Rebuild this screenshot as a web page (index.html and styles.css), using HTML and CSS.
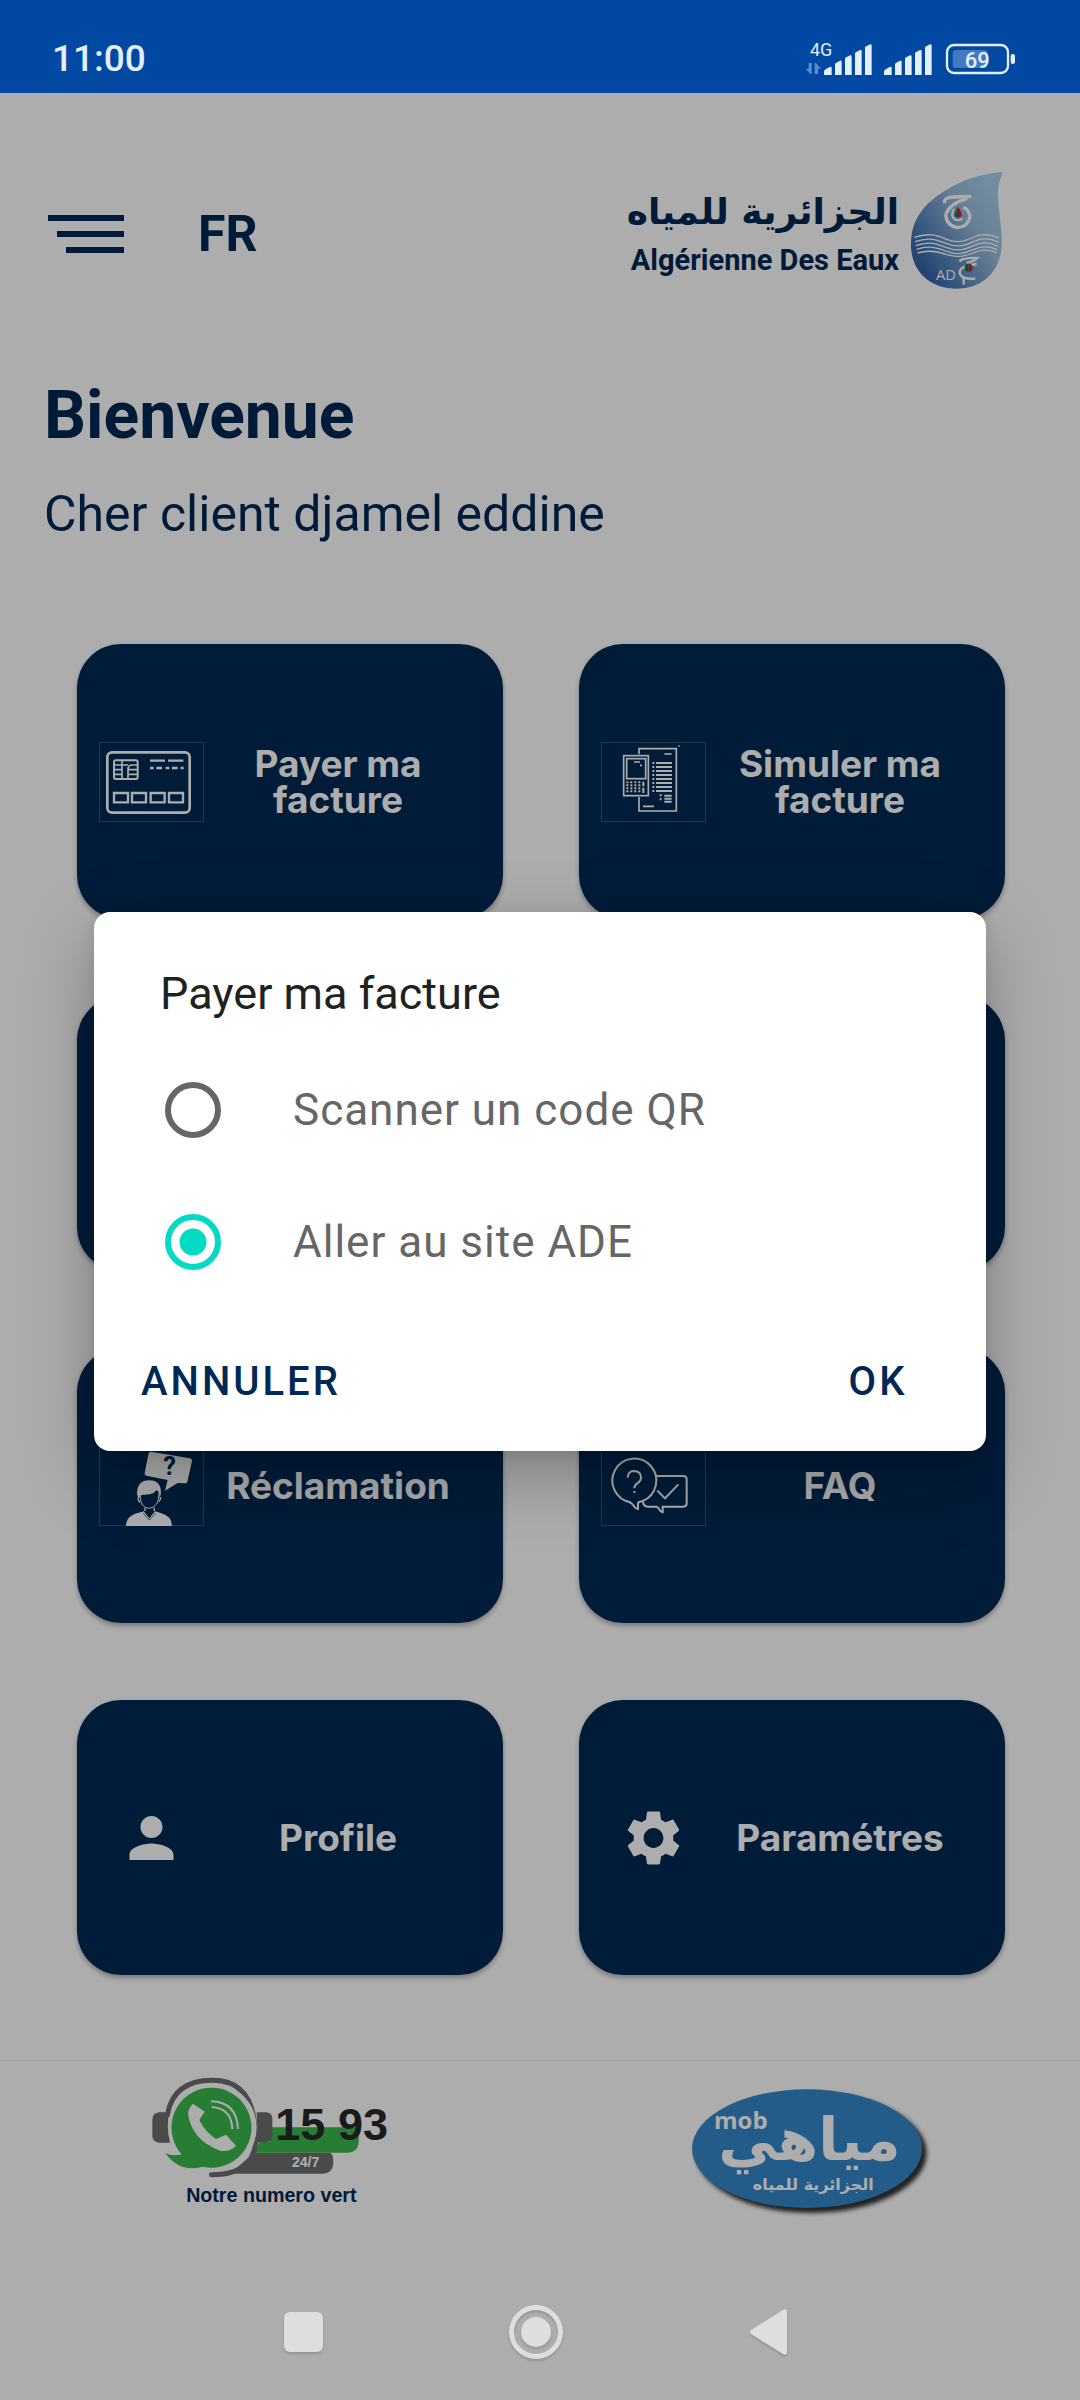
FILE: index.html
```html
<!DOCTYPE html>
<html lang="fr">
<head>
<meta charset="utf-8">
<meta name="viewport" content="width=device-width, initial-scale=1">
<title>Algérienne Des Eaux</title>
<link rel="stylesheet" href="styles.css">
</head>
<body>
<header class="status-bar">
  <span class="clock">11:00</span>
  <svg class="status-icons" viewBox="72 36 636 144" aria-hidden="true">
    <text class="network" x="90" y="102">4G</text>
    <g fill="#5c8cd0"><path d="M77 140h9v-17h9v33h-4zM104 156v-33h4l15 17h-9v16z"/></g>
    <g id="bars" fill="#e4eefc">
      <path d="M132 159v-10q0-4 5-7l12-7q6-2 6 3v21zM165 159v-32q0-3 4-5l11-6q5-1 5 4v39zM195 159v-48q0-4 4-5l11-6q5-1 5 4v55zM225 159V95q0-4 4-5l11-6q5-1 5 4v71zM255 159V78q0-4 4-5l11-6q5-1 5 4v88z"/>
    </g>
    <use href="#bars" x="180"/>
    <rect x="501" y="69" width="183" height="84" rx="21" fill="none" stroke="#e4eefc" stroke-width="7"/>
    <rect x="518" y="84" width="104" height="54" rx="10" fill="#4478c0"/>
    <rect x="692" y="96" width="13" height="30" rx="6" fill="#e4eefc"/>
    <text class="charge" x="554" y="137">69</text>
  </svg>
</header>

<div class="app">
  <main class="home">
    <div class="top-bar">
      <div class="top-actions">
        <button class="menu" type="button" aria-label="Menu">
          <svg viewBox="0 0 76 38"><path d="M0 0h76v6H0zM9 16h67v6H9zM18 32h58v6H18z" fill="#002854"/></svg>
        </button>
        <button class="language" type="button">FR</button>
      </div>
      <div class="brand">
        <div class="brand-name">
          <span class="brand-ar" lang="ar" dir="rtl">الجزائرية للمياه</span>
          <span class="brand-fr">Algérienne Des Eaux</span>
        </div>
        <svg class="drop" viewBox="930 60 282 360" aria-hidden="true">
          <defs>
            <linearGradient id="water" x1="1" y1="0.25" x2="0.2" y2="0.9">
              <stop offset="0" stop-color="#a9d0ea"/><stop offset="0.35" stop-color="#98bddc"/>
              <stop offset="0.65" stop-color="#6b96c8"/><stop offset="1" stop-color="#3466ab"/>
            </linearGradient>
          </defs>
          <path fill="url(#water)" d="M1206 66C1125 72 1045 105 985 160C945 200 932 240 933 290C936 365 990 416 1070 416C1150 416 1205 360 1205 280C1206 220 1190 160 1195 110C1198 90 1206 80 1206 66Z"/>
          <g fill="none" stroke="#fff" stroke-width="4">
            <path d="M943 262C985 248 1010 255 1040 268C1080 283 1100 270 1130 258C1155 249 1175 254 1197 264"/>
            <path d="M945 275C985 261 1010 268 1040 281C1080 296 1100 283 1130 271C1155 262 1175 267 1197 277"/>
            <path d="M947 287C985 273 1010 280 1040 293C1080 308 1100 295 1130 283C1155 274 1175 279 1195 289"/>
            <path d="M950 298C985 286 1010 292 1040 304C1080 319 1100 306 1130 295C1155 286 1175 291 1192 299"/>
            <path d="M953 309C985 299 1010 303 1040 314C1080 325 1100 316 1130 305C1155 297 1175 301 1190 308"/>
          </g>
          <path d="M1034 160Q1032 146 1048 143Q1080 138 1114 140" fill="none" stroke="#fff" stroke-width="10"/>
          <path d="M1102 145Q1050 160 1038 192A36 36 0 1 0 1110 200Q1108 180 1090 172" fill="none" stroke="#fff" stroke-width="10"/>
          <path d="M1062 176Q1050 196 1064 208Q1076 214 1088 206" fill="none" stroke="#fff" stroke-width="6"/>
          <path d="M1074 170Q1058 196 1068 201L1074 203Z" fill="#008050"/><path d="M1074 170Q1092 196 1080 201L1074 203Z" fill="#d02020"/>
          <text class="drop-label" x="1008" y="390">AD</text>
          <path d="M1078 334Q1090 322 1132 324Q1118 336 1100 338M1130 342Q1072 350 1080 372Q1086 388 1126 386M1090 384L1092 404" fill="none" stroke="#fff" stroke-width="7"/>
          <path d="M1106 341a12 12 0 0 0 0 24z" fill="#008050"/><path d="M1106 341a12 12 0 0 1 0 24z" fill="#d02020"/>
        </svg>
      </div>
    </div>

    <h1 class="welcome">Bienvenue</h1>
    <p class="client">Cher client djamel eddine</p>

    <div class="tiles">
      <button class="tile" type="button">
        <svg class="tile-icon framed" viewBox="117 363 315 240" fill="none" stroke="#fff" aria-hidden="true">
          <rect x="142" y="394" width="247" height="181" rx="14" stroke-width="8"/>
          <rect x="162" y="418" width="71" height="56" rx="5" stroke-width="6"/>
          <path d="M162 432h24M162 446h24M162 460h24M186 418v56M204 474v-30q0-10 10-12h19M204 446h29M204 460h29M186 432h18" stroke-width="5"/>
          <path d="M270 419h45M324 419h46" stroke-width="7"/>
          <path d="M270 441h11M289 441h17M317 441h11M336 441h17M362 441h9" stroke-width="7"/>
          <path d="M162 516h42v28h-42zM216 516h42v28h-42zM272 516h42v28h-42zM327 516h42v28h-42z" stroke-width="7"/>
        </svg>
        <span class="tile-label">Payer ma facture</span>
      </button>
      <button class="tile" type="button">
        <svg class="tile-icon framed" viewBox="123 363 315 240" fill="none" stroke="#fff" aria-hidden="true">
          <path d="M237 400v-17h112v187H237v-42" stroke-width="5"/>
          <rect x="191" y="404" width="74" height="120" stroke-width="5"/>
          <rect x="200" y="413" width="57" height="60" stroke-width="5"/>
          <path d="M222 423h18M240 433h6M313 399h22M249 556h33M355 375h4" stroke-width="5"/>
          <path d="M288 426h48M288 438h48M288 450h48M288 462h48M288 474h48M288 486h48M288 498h48M288 510h48M313 524h22M313 533h22M313 542h22" stroke-width="6"/>
          <path d="M280 423v92M302 520v18" stroke-width="6" stroke-dasharray="6 6"/>
          <path d="M202 481v36M214 481v36M226 481v36M238 481v36" stroke-width="6" stroke-dasharray="6 3"/>
          <path d="M250 482v14M250 500v16" stroke-width="6"/>
        </svg>
        <span class="tile-label">Simuler ma facture</span>
      </button>

      <div class="tile"></div>
      <div class="tile"></div>

      <button class="tile" type="button">
        <svg class="tile-icon framed" viewBox="117 313 315 240" fill="#fff" aria-hidden="true">
          <path d="M272 330L390 350Q397 352 396 358L382 421Q380 426 374 425L353 424L315 447L323 415L259 402Q253 400 254 394L266 334Z"/>
          <text class="bubble-mark" x="310" y="401">?</text>
          <path d="M231 455Q232 416 268 416Q303 416 303 455L299 470Q298 446 288 446Q282 460 252 459Q240 458 237 471L234 470Z"/>
          <path d="M241 462Q240 499 268 500Q297 497 297 455" fill="none" stroke="#fff" stroke-width="3"/>
          <path d="M234 470q0 8 6 12M302 466q0 10-6 14M255 498v10M283 498v10" fill="none" stroke="#fff" stroke-width="4"/>
          <path d="M198 553Q198 522 236 513L251 509L268 530L285 509L300 513Q336 522 336 553Z"/>
          <path d="M249 514L268 535L287 514" fill="none" stroke="#002a54" stroke-width="2"/>
        </svg>
        <span class="tile-label">Réclamation</span>
      </button>
      <button class="tile" type="button">
        <svg class="tile-icon framed" viewBox="123 313 315 240" fill="none" stroke="#fff" stroke-width="6" aria-hidden="true">
          <path d="M212 482A66 66 0 1 1 248 478Q236 480 234 484L234 502Q228 502 224 496Q216 484 208 482"/>
          <path d="M290 403H370Q380 403 380 413V485Q380 495 370 495H308V512Q302 512 298 504Q294 495 288 495H264Q250 495 249 480"/>
          <path d="M203 408Q204 388 222 388Q243 389 243 408Q243 418 232 425Q223 430 223 440M223 448v6" />
          <path d="M292 447L315 470L355 428"/>
        </svg>
        <span class="tile-label">FAQ</span>
      </button>

      <button class="tile" type="button">
        <svg class="tile-icon" viewBox="0 0 24 24" fill="#fff" aria-hidden="true"><path d="M12 12c2.210 0 4-1.790 4-4s-1.790-4-4-4-4 1.790-4 4 1.790 4 4 4zm0 2c-2.670 0-8 1.340-8 4v2h16v-2c0-2.660-5.330-4-8-4z"/></svg>
        <span class="tile-label">Profile</span>
      </button>
      <button class="tile" type="button">
        <svg class="tile-icon" viewBox="0 0 24 24" fill="#fff" aria-hidden="true"><path d="M19.140 12.940c.04-.3.060-.61.060-.94 0-.32-.02-.64-.07-.94l2.030-1.580c.18-.14.230-.41.120-.61l-1.920-3.320c-.12-.22-.37-.29-.59-.22l-2.390.96c-.5-.38-1.030-.7-1.620-.94l-.36-2.540c-.04-.24-.24-.41-.48-.41h-3.840c-.24 0-.43.17-.47.41l-.36 2.540c-.59.24-1.130.57-1.620.94l-2.390-.96c-.22-.08-.47 0-.59.22L2.740 8.870c-.12.21-.08.47.12.61l2.030 1.580c-.05.3-.09.63-.09.94s.02.64.07.94l-2.030 1.580c-.18.14-.23.41-.12.61l1.920 3.320c.12.22.37.29.59.22l2.390-.96c.5.38 1.030.7 1.620.94l.36 2.540c.05.24.24.41.48.41h3.840c.24 0 .44-.17.47-.41l.36-2.540c.59-.24 1.130-.56 1.620-.94l2.390.96c.22.08.47 0 .59-.22l1.920-3.320c.12-.22.070-.47-.12-.61l-2.010-1.580zM12 15.600c-1.980 0-3.600-1.620-3.600-3.600s1.620-3.600 3.600-3.600 3.600 1.620 3.600 3.600-1.620 3.600-3.600 3.600z"/></svg>
        <span class="tile-label">Paramétres</span>
      </button>
    </div>
  </main>

  <footer class="links">
    <svg class="hotline" viewBox="60 102 720 402">
      <path d="M372 338H600Q610 340 610 370Q608 400 580 401H300Z" fill="#6e6e6e"/>
      <path d="M420 262H686V305Q684 338 650 338H372L388 306H420Z" fill="#39b84c"/>
      <path d="M244 404Q395 405 375 262Q365 121 247 121Q130 121 112 225" fill="none" stroke="#6e6e6e" stroke-width="15" stroke-linecap="round"/>
      <path d="M380 217H410Q427 219 427 236V288Q426 305 408 307H384ZM118 217H88Q68 219 67 238V288Q68 306 88 308H120Q108 260 118 217Z" fill="#6e6e6e"/>
      <circle cx="248" cy="262" r="132" fill="#fff"/>
      <path d="M155 343A120 120 0 1 1 218 380Q150 400 106 340Q130 350 155 343Z" fill="#39b84c"/>
      <path d="M189 191L224 215L208 240Q225 275 258 297L288 284L318 317Q298 338 270 332Q185 300 174 222Q174 206 189 191Z" fill="#fff"/>
      <path d="M243 184Q320 186 324 267M245 201Q305 205 307 267" fill="none" stroke="#fff" stroke-width="6"/>
      <text class="hotline-number" x="436" y="299">15 93</text>
      <text class="hotline-hours" x="486" y="381">24/7</text>
      <text class="hotline-caption" x="424" y="486">Notre numero vert</text>
    </svg>
    <svg class="mobile-app" viewBox="54 42 732 432">
      <defs><filter id="soft" x="-10%" y="-10%" width="120%" height="130%"><feGaussianBlur stdDeviation="7"/></filter></defs>
      <ellipse cx="424" cy="279" rx="346" ry="180" fill="#333" filter="url(#soft)"/>
      <ellipse cx="411" cy="266" rx="345" ry="178" fill="#3588cb"/>
      <text class="app-mob" x="132" y="206">mob</text>
      <text class="app-name" x="418" y="300" lang="ar">مياهي</text>
      <text class="app-owner" x="430" y="391" lang="ar">الجزائرية للمياه</text>
    </svg>
  </footer>

  <div class="scrim">
    <form class="dialog" role="dialog" aria-labelledby="dialog-title">
      <h2 class="dialog-title" id="dialog-title">Payer ma facture</h2>
      <label class="option"><input type="radio" name="mode">Scanner un code QR</label>
      <label class="option"><input type="radio" name="mode" checked>Aller au site ADE</label>
      <div class="actions">
        <button class="action" type="button">ANNULER</button>
        <button class="action" type="button">OK</button>
      </div>
    </form>
  </div>
</div>

<nav class="system-nav">
  <button type="button" aria-label="Applications"><svg viewBox="0 0 60 60"><rect x="11" y="10" width="39" height="40" rx="6"/></svg></button>
  <button type="button" aria-label="Accueil"><svg viewBox="0 0 60 60"><path fill-rule="evenodd" d="M30 3a27 27 0 1 1 0 54a27 27 0 1 1 0-54zm0 5a22 22 0 1 0 0 44a22 22 0 1 0 0-44z"/><circle cx="30" cy="30" r="15"/></svg></button>
  <button type="button" aria-label="Retour"><svg viewBox="0 0 60 60"><path d="M12 28L44 8Q48 6 48 10V50Q48 54 44 52L12 32Q10 30 12 28Z"/></svg></button>
</nav>
</body>
</html>
```
FILE: styles.css
```css
* { box-sizing: border-box; }

body {
  margin: 0;
  min-height: 100vh;
  display: flex;
  flex-direction: column;
  background: #adadad;
  color: #002854;
  font-family: Roboto, "Liberation Sans", sans-serif;
}

button {
  border: 0;
  padding: 0;
  background: none;
  color: inherit;
  font: inherit;
}

svg { display: block; }
h1, h2, p { margin: 0; }

.status-bar {
  display: flex;
  align-items: center;
  justify-content: space-between;
  height: 93px;
  padding: 22px 64px 0 52px;
  background: #0048a2;
  color: #e4eefc;
}
.clock { padding-top: 2px; font-size: 37px; line-height: 48px; font-weight: 500; }
.status-icons { width: 212px; height: 48px; fill: #e4eefc; overflow: visible; }
.network { font-size: 54px; }
.charge { font-size: 66px; font-weight: 500; }

.app {
  position: relative;
  flex: 1;
  display: flex;
  flex-direction: column;
  background: #fff;
}
.home { flex: 1; }

.top-bar {
  display: flex;
  align-items: center;
  justify-content: space-between;
  padding: 77px 76px 0 48px;
}
.top-actions {
  display: flex;
  align-items: center;
  gap: 74px;
  padding-top: 7px;
}
.menu svg { width: 76px; height: 38px; }
.language {
  font-size: 50px;
  line-height: 56px;
  font-weight: 700;
}
.brand {
  display: flex;
  align-items: center;
  gap: 11px;
}
.brand-name {
  display: flex;
  flex-direction: column;
  align-items: flex-end;
  font-weight: 700;
}
.brand-ar { font-family: "DejaVu Sans", sans-serif; font-size: 36px; line-height: 60px; }
.brand-fr { font-size: 29px; line-height: 36px; }
.drop { width: 94px; height: 120px; }
.drop-label { font: 44px "Open Sans", sans-serif; fill: #fff; }

.welcome {
  margin-top: 86px;
  padding: 0 44px;
  font-size: 66px;
  line-height: 80px;
  font-weight: 700;
}
.client {
  margin-top: 28px;
  padding: 0 44px;
  font-size: 50px;
  line-height: 60px;
}

.tiles {
  display: grid;
  grid-template-columns: 1fr 1fr;
  grid-auto-rows: 275px;
  gap: 77px 76px;
  margin-top: 100px;
  padding: 0 75px 0 77px;
}
.tile {
  display: flex;
  align-items: center;
  padding: 0 31px 0 22px;
  border-radius: 44px;
  background: #002a54;
  box-shadow: 0 3px 5px rgba(0, 0, 0, 0.3);
  color: #fff;
}
.tile-icon { width: 105px; height: 66px; flex: none; }
.tile-icon.framed {
  height: 80px;
  outline: 1px solid rgba(255, 255, 255, 0.2);
  outline-offset: -1px;
}
.tile-label {
  flex: 1;
  font-family: Inter, sans-serif;
  font-size: 37px;
  line-height: 36px;
  font-weight: 700;
  text-align: center;
}
.bubble-mark { font: 700 76px Roboto, sans-serif; fill: #002a54; }

.links {
  display: grid;
  grid-template-columns: 1fr 1fr;
  justify-items: center;
  align-items: start;
  height: 210px;
  padding-top: 13px;
  border-top: 1px solid #f2f2f2;
}
.hotline { width: 240px; height: 134px; }
.mobile-app { width: 244px; height: 144px; }
.hotline text { font-family: "Liberation Sans", sans-serif; font-weight: 700; }
.hotline-number { font-size: 135px; fill: #292929; }
.hotline-hours { font-size: 42px; fill: #fff; }
.hotline-caption { font-size: 59px; fill: #002854; text-anchor: middle; }
.mobile-app text { fill: #fff; font-weight: 700; }
.app-mob { font-family: "Open Sans", sans-serif; font-size: 72px; }
.app-name { font-family: "DejaVu Sans", sans-serif; font-size: 176px; text-anchor: middle; }
.app-owner { font-family: "DejaVu Sans", sans-serif; font-size: 48px; text-anchor: middle; }

/* Modal layer over the home screen */
.scrim {
  position: absolute;
  inset: 0;
  display: flex;
  align-items: center;
  justify-content: center;
  padding: 0 94px;
  background: rgba(0, 0, 0, 0.32);
}
.dialog {
  width: 100%;
  padding: 56px 20px 20px;
  border-radius: 16px;
  background: #fff;
  box-shadow: 0 24px 72px rgba(0, 0, 0, 0.28), 0 4px 16px rgba(0, 0, 0, 0.08);
}
.dialog-title {
  margin-bottom: 22px;
  padding-left: 46px;
  color: #212121;
  font-size: 45px;
  line-height: 52px;
  font-weight: 400;
}
.option {
  display: flex;
  align-items: center;
  gap: 72px;
  height: 132px;
  padding: 3px 0 0 51px;
  color: #666;
  font-size: 44px;
  letter-spacing: 1px;
}
.option input {
  appearance: none;
  width: 56px;
  height: 56px;
  margin: 0;
  border: 6px solid #666;
  border-radius: 50%;
}
.option input:checked {
  border-color: #03dac5;
  background: radial-gradient(circle, #03dac5 13px, transparent 14px);
}
.actions {
  display: flex;
  justify-content: space-between;
  padding: 25px 0 0 5px;
}
.action {
  min-width: 176px;
  height: 100px;
  padding: 0 22px;
  font-size: 40px;
  font-weight: 500;
  letter-spacing: 3px;
}

.system-nav {
  display: flex;
  justify-content: center;
  gap: 173px;
  height: 130px;
  padding: 32px 8px 0 0;
}
.system-nav svg {
  width: 60px;
  height: 60px;
  fill: #dedede;
  filter: drop-shadow(0 2px 1px rgba(0, 0, 0, 0.15));
}
.system-nav button { height: 60px; }
```
